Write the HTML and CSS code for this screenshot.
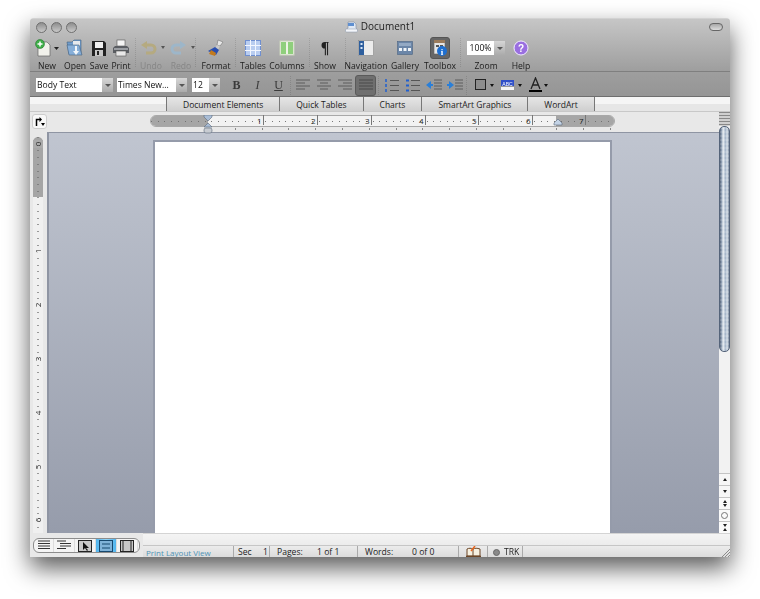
FILE: index.html
```html
<!DOCTYPE html>
<html lang="en">

<head>
     <meta charset="UTF-8">
     <meta name="viewport" content="width=device-width, initial-scale=1.0">
     <title>Document1</title>
     <link rel="stylesheet" href="styles.css">
</head>

<body>
     <div class="window">
          <div class="titlebar">
               <div class="lights"><span></span><span></span><span></span></div>
               <div class="title">
                    <svg width="13" height="13" viewBox="0 0 13 13"><path d="M1 11c0-2 1-2 2-3V2h6l2 2v4c1 1 1.500 2 1 3z" fill="#dfe8f4" stroke="#7f8ca0" stroke-width=".6"/><rect x="3" y="3" width="6" height="3" fill="#5f8fd0"/><rect x="0.500" y="9" width="12" height="3" rx="1" fill="#f4f6fa" stroke="#8b96a8" stroke-width=".5"/></svg>
                    <span>Document1</span>
               </div>
               <div class="pill"></div>
          </div>

          <div class="toolbar">
               <div class="tool"><div class="ico"><svg width="26" height="20" viewBox="0 0 26 20"><path d="M4 4h9l3 3v11H4z" fill="#f2f2ec" stroke="#666" stroke-width=".7"/><circle cx="6" cy="6" r="4.500" fill="#3fae48" stroke="#1c6e24" stroke-width=".5"/><path d="M6 3.500v5M3.500 6h5" stroke="#fff" stroke-width="1.500"/><path d="M20 9h5l-2.500 3z" fill="#222"/></svg></div><p>New</p></div>
               <div class="tool"><div class="ico"><svg width="18" height="18" viewBox="0 0 18 18"><path d="M1 3h5l2-2h7v14H3z" fill="#6f9ccc" stroke="#45617f" stroke-width=".6"/><path d="M7 2h7v9H7z" fill="#e6e9ed"/><path d="M1 6h12l3 10H3z" fill="#86aed8" stroke="#45617f" stroke-width=".6"/><path d="M9 7v5H7l3 4 3-4h-2V7z" fill="#f2f6fa"/></svg></div><p>Open</p></div>
               <div class="tool"><div class="ico"><svg width="16" height="18" viewBox="0 0 16 18"><path d="M1 2h12l2 2v13H1z" fill="#222"/><rect x="4" y="3" width="8" height="6" fill="#f0f0f0"/><rect x="4" y="11" width="8" height="6" fill="#c8c8c8"/><rect x="6" y="12" width="2" height="4" fill="#222"/></svg></div><p>Save</p></div>
               <div class="tool"><div class="ico"><svg width="18" height="18" viewBox="0 0 18 18"><rect x="5" y="1" width="8" height="6" fill="#f4f4f4" stroke="#555" stroke-width=".6"/><path d="M3 7h12l2 2v5H1V9z" fill="#5a5d62"/><rect x="2" y="9" width="14" height="2" fill="#9a9da2"/><rect x="4" y="12" width="10" height="5" fill="#e8e8e8" stroke="#555" stroke-width=".6"/></svg></div><p>Print</p></div>
               <div class="sep"></div>
               <div class="tool off"><div class="ico"><svg width="28" height="16" viewBox="0 0 28 16"><path d="M9 5h5a4 4 0 0 1 0 8H9" fill="none" stroke="#b5aa80" stroke-width="3"/><path d="M4 5l6-4v8z" fill="#b5aa80"/><path d="M24 6h4l-2 3z" fill="#555"/></svg></div><p>Undo</p></div>
               <div class="tool off"><div class="ico"><svg width="28" height="16" viewBox="0 0 28 16"><path d="M14 5H9a4 4 0 0 0 0 8h5" fill="none" stroke="#9db6c9" stroke-width="3"/><path d="M19 5l-6-4v8z" fill="#9db6c9"/><path d="M24 6h4l-2 3z" fill="#555"/></svg></div><p>Redo</p></div>
               <div class="sep"></div>
               <div class="tool"><div class="ico"><svg width="18" height="18" viewBox="0 0 18 18"><path d="M11 1l5 2-3 4-3-1z" fill="#e8e8e8" stroke="#666" stroke-width=".5"/><path d="M10 6l3 1-2 4-3-2z" fill="#c9c9c9"/><path d="M1 12l7-4 4 3-3 5z" fill="#2a4fb0"/><path d="M4 11l5 3-1 3-6-2z" fill="#c27a1e"/></svg></div><p>Format</p></div>
               <div class="sep"></div>
               <div class="tool"><div class="ico"><svg width="16" height="16" viewBox="0 0 16 16"><rect x=".5" y=".5" width="15" height="15" fill="#b9cdf0" stroke="#6f8fd0"/><path d="M5.500 0v16M10.500 0v16M0 5.500h16M0 10.500h16" stroke="#f2f6ff"/></svg></div><p>Tables</p></div>
               <div class="tool"><div class="ico"><svg width="16" height="16" viewBox="0 0 16 16"><rect x="1" y="1" width="14" height="14" fill="#eef3e6" stroke="#c9d4bc"/><rect x="2" y="2" width="5" height="12" fill="#8fcf7c"/><rect x="9" y="2" width="5" height="12" fill="#8fcf7c"/></svg></div><p>Columns</p></div>
               <div class="sep"></div>
               <div class="tool"><div class="ico show">¶</div><p>Show</p></div>
               <div class="sep"></div>
               <div class="tool"><div class="ico"><svg width="16" height="16" viewBox="0 0 16 16"><rect x=".5" y=".5" width="15" height="15" fill="#ececec" stroke="#888" stroke-width=".6"/><rect x="1" y="1" width="5" height="14" fill="#2e5f9e"/><rect x="2.500" y="3" width="2" height="2" fill="#d8e6f6"/><rect x="2.500" y="7" width="2" height="2" fill="#d8e6f6"/></svg></div><p>Navigation</p></div>
               <div class="tool"><div class="ico"><svg width="16" height="14" viewBox="0 0 16 14"><rect x=".5" y=".5" width="15" height="13" fill="#6b86a8" stroke="#4d6482" stroke-width=".6"/><rect x="2" y="2" width="12" height="3" fill="#93a9c4"/><rect x="2" y="7" width="3" height="3" fill="#f0f4f8"/><rect x="6.500" y="7" width="3" height="3" fill="#f0f4f8"/><rect x="11" y="7" width="3" height="3" fill="#f0f4f8"/></svg></div><p>Gallery</p></div>
               <div class="tool"><div class="ico pressed"><svg width="16" height="18" viewBox="0 0 16 18"><rect x="2" y="1" width="11" height="14" fill="#e6e6e6" stroke="#666" stroke-width=".6"/><rect x="2" y="1" width="11" height="3" fill="#9a7b5c"/><rect x="4" y="6" width="3" height="2" fill="#555"/><rect x="8" y="6" width="3" height="2" fill="#555"/><circle cx="10" cy="12" r="5" fill="#1f6fd0"/><text x="10" y="15.500" class="info">i</text></svg></div><p>Toolbox</p></div>
               <div class="sep"></div>
               <div class="tool"><div class="zoombox"><span>100%</span><i class="arrow"></i></div><p>Zoom</p></div>
               <div class="tool"><div class="ico"><svg width="16" height="16" viewBox="0 0 16 16"><circle cx="8" cy="8" r="7" fill="#9a6fe0" stroke="#f2ecff"/><text x="8" y="11.500" class="help">?</text></svg></div><p>Help</p></div>
          </div>

          <div class="formatbar">
               <div class="combo body"><span>Body Text</span><i class="arrow"></i></div>
               <div class="combo font"><span>Times New...</span><i class="arrow"></i></div>
               <div class="combo size"><span>12</span><i class="arrow"></i></div>
               <div class="fbtn letter bold">B</div>
               <div class="fbtn letter ital">I</div>
               <div class="fbtn letter under">U</div>
               <div class="fsep"></div>
               <div class="fbtn"><svg width="14" height="12" viewBox="0 0 14 12"><path d="M0 1h14M0 4h9M0 7h14M0 10h9" stroke="#5c5c5c"/></svg></div>
               <div class="fbtn"><svg width="14" height="12" viewBox="0 0 14 12"><path d="M0 1h14M3 4h8M0 7h14M3 10h8" stroke="#5c5c5c"/></svg></div>
               <div class="fbtn"><svg width="14" height="12" viewBox="0 0 14 12"><path d="M0 1h14M5 4h9M0 7h14M5 10h9" stroke="#5c5c5c"/></svg></div>
               <div class="fbtn active"><svg width="14" height="12" viewBox="0 0 14 12"><path d="M0 1h14M0 4h14M0 7h14M0 10h14" stroke="#4a4a4a"/></svg></div>
               <div class="fsep"></div>
               <div class="fbtn"><svg width="14" height="14" viewBox="0 0 14 14"><path d="M1 1v3M1 6v3M1 11v3" stroke="#1f5fd0" stroke-width="1.500"/><path d="M5 2.500h9M5 7.500h9M5 12.500h9" stroke="#555"/></svg></div>
               <div class="fbtn"><svg width="14" height="14" viewBox="0 0 14 14"><path d="M0 2.500h3M0 7.500h3M0 12.500h3" stroke="#1f5fd0" stroke-width="2"/><path d="M5 2.500h9M5 7.500h9M5 12.500h9" stroke="#555"/></svg></div>
               <div class="fbtn"><svg width="16" height="12" viewBox="0 0 16 12"><path d="M0 6l5-4v8z" fill="#2a7fd8"/><path d="M4 6h3" stroke="#2a7fd8" stroke-width="2"/><path d="M8 1h8M8 4h8M8 7h8M8 10h8" stroke="#5c5c5c"/></svg></div>
               <div class="fbtn"><svg width="16" height="12" viewBox="0 0 16 12"><path d="M7 6L2 2v8z" fill="#2a7fd8"/><path d="M0 6h3" stroke="#2a7fd8" stroke-width="2"/><path d="M8 1h8M8 4h8M8 7h8M8 10h8" stroke="#5c5c5c"/></svg></div>
               <div class="fsep last"></div>
               <div class="fpick"><svg width="20" height="12" viewBox="0 0 20 12"><rect x=".5" y=".5" width="10" height="10" fill="#8d8d8d" stroke="#222"/><path d="M15 5h4l-2 3z" fill="#111"/></svg></div>
               <div class="fpick"><svg width="22" height="14" viewBox="0 0 22 14"><rect x="0" y="2" width="13" height="6" fill="#2f4fc8"/><text x="6.500" y="7.500" class="abc">ABC</text><rect x="0" y="9" width="13" height="3" fill="#f4f4f4"/><path d="M17 6h4l-2 3z" fill="#111"/></svg></div>
               <div class="fpick"><svg width="22" height="16" viewBox="0 0 22 16"><path d="M2 12L6.500 1 11 12M4 8h5" fill="none" stroke="#222" stroke-width="1.300"/><rect x="0" y="13" width="13" height="2" fill="#000"/><path d="M15 7h4l-2 3z" fill="#111"/></svg></div>
          </div>

          <div class="tabbar">
               <div class="tab">Document Elements</div>
               <div class="tab">Quick Tables</div>
               <div class="tab">Charts</div>
               <div class="tab">SmartArt Graphics</div>
               <div class="tab">WordArt</div>
          </div>

          <div class="rulerrow">
               <div class="corner"><svg width="10" height="9" viewBox="0 0 10 9"><path d="M1.500 9V2.500H5" fill="none" stroke="#000" stroke-width="1.500"/><path d="M4.500 0v5L7 2.500zM6 6h4L8 9z" fill="#000"/></svg></div>
               <div class="hruler">
                    <div class="hmargin left"></div>
                    <div class="hmargin right"></div>
                    <b class="n1">1</b><b class="n2">2</b><b class="n3">3</b><b class="n4">4</b><b class="n5">5</b><b class="n6">6</b><b class="n7">7</b>
                    <svg class="indent" width="10" height="19" viewBox="0 0 10 19"><path d="M1 0h8v2L5 6 1 2z" fill="#a9bdd6" stroke="#5c6a7a" stroke-width=".6"/><path d="M5 8l4 4H1z" fill="#a9bdd6" stroke="#5c6a7a" stroke-width=".6"/><rect x="1" y="13" width="8" height="5" rx="2" fill="#c8ccd2" stroke="#5c6a7a" stroke-width=".6"/></svg>
                    <svg class="rindent" width="10" height="8" viewBox="0 0 10 8"><path d="M5 1l4 4v2H1V5z" fill="#c3d3e6" stroke="#5c6a7a" stroke-width=".6"/></svg>
               </div>
          </div>
          <div class="hticks"></div>

          <div class="main">
               <div class="vside">
                    <div class="vruler">
                         <div class="vmargin"></div>
                         <b class="v0">0</b><b class="v1">1</b><b class="v2">2</b><b class="v3">3</b><b class="v4">4</b><b class="v5">5</b><b class="v6">6</b>
                    </div>
               </div>
               <div class="canvas">
                    <div class="page"></div>
               </div>
               <div class="vscroll">
                    <div class="splitter"></div>
                    <div class="thumb"></div>
                    <div class="track"></div>
                    <div class="sbtn"><i class="up"></i></div>
                    <div class="sbtn"><i class="down"></i></div>
                    <div class="sbtn nav"><i class="up"></i><i class="down"></i></div>
                    <div class="sbtn nav"><i class="dot"></i></div>
                    <div class="sbtn nav"><i class="down"></i><i class="up"></i></div>
               </div>
          </div>

          <div class="bottom">
               <div class="views">
                    <div class="capsule">
                         <div class="view"><svg width="14" height="11" viewBox="0 0 14 11"><path d="M1 1h12M1 3.500h12M1 6h12M1 8.500h12" stroke="#333"/></svg></div>
                         <div class="view"><svg width="16" height="11" viewBox="0 0 16 11"><path d="M1 1h9M4 3.500h11M4 6h11M1 8.500h9" stroke="#333"/></svg></div>
                         <div class="view"><svg width="14" height="12" viewBox="0 0 14 12"><rect x=".5" y=".5" width="13" height="11" fill="#c9c9c9" stroke="#222"/><path d="M5 2v8l2-2 2 3 1-1-2-2h3z" fill="#111"/></svg></div>
                         <div class="view on"><svg width="14" height="12" viewBox="0 0 14 12"><rect x=".5" y=".5" width="13" height="11" fill="#7fb2d8" stroke="#17486e"/><path d="M3 4h8M3 8h8" stroke="#17486e"/></svg></div>
                         <div class="view"><svg width="14" height="12" viewBox="0 0 14 12"><rect x=".5" y=".5" width="13" height="11" fill="#c9c9c9" stroke="#222"/><path d="M3 1v10M11 1v10" stroke="#222"/></svg></div>
                    </div>
               </div>
               <div class="statuswrap">
                    <div class="hscroll"></div>
                    <div class="status">
                         <div class="cell viewname">Print Layout View</div>
                         <div class="cell pair sec"><span>Sec</span><span>1</span></div>
                         <div class="cell pair pages"><span>Pages:</span><span>1 of 1</span></div>
                         <div class="cell pair words"><span>Words:</span><span>0 of 0</span></div>
                         <div class="cell book"><svg width="15" height="12" viewBox="0 0 15 12"><path d="M1 3c2-1 4-1 6 0 2-1 4-1 7 0v7H1z" fill="#f6f0e0" stroke="#6b4526"/><path d="M7 3v7" stroke="#6b4526"/><path d="M0 10.500h15" stroke="#6b4526" stroke-width="1.500"/><path d="M5 5l4-5" stroke="#e8641c" stroke-width="1.500"/></svg></div>
                         <div class="cell trk"><i></i><span>TRK</span></div>
                         <div class="cell rest"><svg width="10" height="10" viewBox="0 0 10 10"><path d="M1 10l9-9M4 10l6-6M7 10l3-3" stroke="#8a8a8a"/></svg></div>
                    </div>
               </div>
          </div>
     </div>
</body>

</html>
```

FILE: styles.css
```css
* {
     margin: 0px;
     padding: 0px;
     box-sizing: border-box;
     font-family: "Open Sans", "DejaVu Sans", sans-serif;
}

html, body {
     width: 760px;
     height: 599px;
     overflow: hidden;
     background-color: #fff;
}

body {
     padding: 18px 30px 0px 30px;
}

.window {
     width: 700px;
     height: 539px;
     display: flex;
     flex-direction: column;
     background-color: #e8e8e8;
     border-radius: 4px 4px 0px 0px;
     box-shadow: 0px 11px 24px rgba(0, 0, 0, 0.65);
     overflow: hidden;
     filter: blur(0.35px);
}

/* title + toolbar share one gradient */
.titlebar {
     height: 18px;
     flex: none;
     display: flex;
     align-items: center;
     justify-content: center;
     position: relative;
     padding-bottom: 3px;
     background: linear-gradient(#c6c6c6, #b9b9b9);
     border-top: 1px solid #d2d2d2;
}

.lights {
     position: absolute;
     left: 6px;
     top: 3px;
     display: flex;
     gap: 4px;
}

.lights span {
     width: 11px;
     height: 11px;
     border-radius: 50%;
     border: 1px solid #6f6f6f;
     background: linear-gradient(#8d8d8d, #c9c9c9);
}

.title {
     display: flex;
     align-items: center;
     gap: 3px;
     font-size: 10px;
     color: #222;
}

.pill {
     position: absolute;
     right: 7px;
     top: 4px;
     width: 14px;
     height: 8px;
     border-radius: 4px;
     border: 1px solid #666;
     background: linear-gradient(#a8a8a8, #dcdcdc);
}

.toolbar {
     height: 36px;
     flex: none;
     padding: 1px 0px 0px 3px;
     display: grid;
     grid-template-columns: 28px 28px 20px 24px 3px 30px 30px 0px 40px 0px 34px 34px 6px 30px 6px 40px 38px 32px 5px 50px 20px;
     background: linear-gradient(#b9b9b9, #9e9e9e);
     border-bottom: 1px solid #7f7f7f;
}

.tool {
     display: flex;
     flex-direction: column;
     align-items: center;
     width: 100%;
}

.ico {
     height: 22px;
     flex: none;
     display: flex;
     align-items: center;
     justify-content: center;
}

.tool p {
     padding-top: 1px;
     font-size: 8.6px;
     line-height: 12px;
     color: #1c1c1c;
     white-space: nowrap;
}

.tool.off p {
     color: #868686;
}

.sep {
     width: 1px;
     height: 30px;
     justify-self: end;
     margin-top: 1px;
     background: repeating-linear-gradient(rgba(0, 0, 0, 0.12) 0px, rgba(0, 0, 0, 0.12) 1px, transparent 1px, transparent 2px);
}

.show {
     font-size: 16px;
     font-weight: 700;
     color: #222;
     font-family: "Liberation Serif", serif;
}

.pressed {
     width: 20px;
     border-radius: 3px;
     background-color: #666;
     border: 1px solid #555;
}

.info {
     font-family: "Liberation Serif", serif;
     font-size: 9px;
     font-weight: 700;
     fill: #fff;
     text-anchor: middle;
}

.help {
     font-family: "Liberation Sans", sans-serif;
     font-size: 10px;
     font-weight: 700;
     fill: #fff;
     text-anchor: middle;
}

.zoombox {
     width: 38px;
     height: 14px;
     flex: none;
     margin: 4px 0px;
     display: flex;
     background-color: #fff;
     font-size: 8.6px;
     line-height: 14px;
     color: #111;
}

.zoombox span {
     flex: 1;
     text-align: center;
}

.arrow {
     width: 11px;
     display: flex;
     align-items: center;
     justify-content: center;
     background: linear-gradient(#d6d6d6, #ababab);
}

.arrow::after {
     content: "";
     border-left: 3px solid transparent;
     border-right: 3px solid transparent;
     border-top: 3px solid #555;
}

.formatbar {
     height: 25px;
     flex: none;
     display: flex;
     align-items: center;
     padding: 2px 0px 0px 6px;
     background: linear-gradient(#9e9e9e, #959595);
     border-bottom: 1px solid #6e6e6e;
}

.combo {
     height: 14px;
     display: flex;
     background-color: #fff;
     font-size: 8.6px;
     line-height: 14px;
     color: #111;
}

.combo span {
     flex: 1;
     padding-left: 1px;
     white-space: nowrap;
}

.body { width: 77px; margin-right: 4px; }
.font { width: 70px; margin-right: 5px; }
.size { width: 28px; margin-right: 6px; }

.fbtn {
     width: 21px;
     height: 21px;
     display: flex;
     align-items: center;
     justify-content: center;
     flex: none;
}

.fpick {
     height: 21px;
     display: flex;
     align-items: center;
     flex: none;
     margin-right: 6px;
}

.fsep {
     width: 1px;
     height: 19px;
     margin: 0px 1px;
     flex: none;
     background: repeating-linear-gradient(rgba(0, 0, 0, 0.12) 0px, rgba(0, 0, 0, 0.12) 1px, transparent 1px, transparent 2px);
}

.fsep.last {
     margin-right: 8px;
}

.active + .fsep {
     margin: 0px 2px;
}

.letter {
     font-family: "Liberation Serif", serif;
     font-size: 12px;
     color: #3a3a3a;
}

.bold { font-weight: 700; }
.ital { font-style: italic; }
.under { text-decoration: underline; }

.active {
     background-color: #6f6f6f;
     border: 1px solid #5a5a5a;
     border-radius: 3px;
}

.abc {
     font-family: "Liberation Sans", sans-serif;
     font-size: 5px;
     fill: #fff;
     text-anchor: middle;
}

.tabbar {
     height: 15px;
     flex: none;
     display: flex;
     padding-left: 136px;
     background: linear-gradient(#f5f5f5 50%, #e6e6e6 50%);
     border-bottom: 1px solid #c8c8c8;
}

.tab {
     padding: 0px 16px;
     font-size: 8.5px;
     line-height: 16px;
     color: #222;
     white-space: nowrap;
     background: linear-gradient(#e6e6e6, #cfcfcf);
     border-left: 1px solid #777;
}

.tab:last-child {
     border-right: 1px solid #777;
}

.rulerrow {
     height: 15px;
     flex: none;
     display: flex;
     background-color: #e8e8e8;
     padding-top: 2px;
}

.corner {
     width: 15px;
     height: 15px;
     flex: none;
     margin-left: 2px;
     display: flex;
     align-items: center;
     justify-content: center;
     background-color: #f8f8f8;
     border: 1px solid #ccc;
     border-radius: 3px;
     position: relative;
     z-index: 2;
}

.hruler {
     width: 465px;
     height: 12px;
     flex: none;
     margin: 1px 0px 0px 103px;
     position: relative;
     border-radius: 6px;
     border: 1px solid #a8a8a8;
     background: repeating-linear-gradient(90deg, #777 0px, #777 1px, transparent 1px, transparent 6.72px) 0px 5px / 100% 1px no-repeat #f2f2f2;
}

.hruler b {
     position: absolute;
     top: -1px;
     padding-right: 1px;
     font-size: 8px;
     line-height: 12px;
     font-weight: 400;
     color: #222;
     border-right: 1px solid #777;
     height: 10px;
}

.hmargin {
     position: absolute;
     top: 0px;
     height: 10px;
     background-color: rgba(110, 110, 110, 0.58);
}

.hmargin.left { left: 0px; width: 57px; border-radius: 5px 0px 0px 5px; }
.hmargin.right { right: 0px; width: 58px; border-radius: 0px 5px 5px 0px; }

.n1 { left: 106px; }
.n2 { left: 160px; }
.n3 { left: 214px; }
.n4 { left: 268px; }
.n5 { left: 321px; }
.n6 { left: 375px; }
.n7 { left: 428px; }

.indent { position: absolute; left: 52px; top: -1px; }
.rindent { position: absolute; left: 402px; top: 2px; }

.hticks {
     height: 5px;
     flex: none;
     background: repeating-linear-gradient(90deg, #888 0px, #888 1px, transparent 1px, transparent 26.8px) 178px 1px / 420px 2px no-repeat #e8e8e8;
}

.main {
     flex: 1;
     min-height: 0;
     display: flex;
}

.vside {
     width: 17px;
     flex: none;
     padding: 5px 0px 0px 3px;
     background-color: #e8e8e8;
}

.vruler {
     width: 10px;
     height: 100%;
     position: relative;
     border-radius: 5px 5px 0px 0px;
     background: repeating-linear-gradient(#999 0px, #999 1px, transparent 1px, transparent 6.72px) 4px 0px / 2px 100% no-repeat #f0f0f0;
}

.vmargin {
     position: absolute;
     left: 0px;
     top: 0px;
     width: 100%;
     height: 60px;
     border-radius: 5px 5px 0px 0px;
     background-color: rgba(110, 110, 110, 0.58);
}

.vruler b {
     position: absolute;
     left: 1px;
     width: 8px;
     height: 10px;
     font-size: 8px;
     line-height: 10px;
     font-weight: 400;
     text-align: center;
     color: #222;
     background-color: #f0f0f0;
     transform: rotate(-90deg);
}

.vruler b.v0 { top: 2px; background-color: #aaa; }
.v1 { top: 109px; }
.v2 { top: 163px; }
.v3 { top: 217px; }
.v4 { top: 271px; }
.v5 { top: 325px; }
.v6 { top: 378px; }

.canvas {
     flex: 1;
     display: flex;
     justify-content: center;
     padding: 9px 0px 0px 0px;
     background: linear-gradient(#c0c5d0, #969cab);
     border-top: 1px solid #8f95a3;
     border-left: 2px solid #8f95a3;
}

.page {
     width: 455px;
     height: 100%;
     margin-left: -4px;
     background-color: #fff;
     box-shadow: 0px 0px 0px 2px #959baa;
}

.vscroll {
     width: 11px;
     flex: none;
     display: flex;
     flex-direction: column;
     background-color: #f2f2f2;
     margin-top: -20px;
     z-index: 1;
}

.splitter {
     height: 14px;
     flex: none;
     background: repeating-linear-gradient(#888 0px, #888 1px, #cfcfcf 1px, #cfcfcf 3px);
}

.thumb {
     height: 226px;
     flex: none;
     border-radius: 5px;
     border: 1px solid #55647a;
     background: repeating-linear-gradient(rgba(255, 255, 255, 0.14) 0px, rgba(255, 255, 255, 0.14) 2px, transparent 2px, transparent 4px), linear-gradient(90deg, #55647a, #8394aa 15%, #e8eef4 35%, #a3b4c8 60%, #d5deE8 80%, #75859a);
}

.track {
     flex: 1;
}

.sbtn {
     height: 12px;
     flex: none;
     display: flex;
     flex-direction: column;
     align-items: center;
     justify-content: center;
     gap: 1px;
     background-color: #f6f6f6;
     border-top: 1px solid #c4c4c4;
}

.sbtn.nav {
     background-color: #fafafa;
}

.up {
     border-left: 2.500px solid transparent;
     border-right: 2.500px solid transparent;
     border-bottom: 3px solid #222;
}

.down {
     border-left: 2.500px solid transparent;
     border-right: 2.500px solid transparent;
     border-top: 3px solid #222;
}

.dot {
     width: 7px;
     height: 7px;
     border-radius: 50%;
     border: 1px solid #777;
}

.bottom {
     height: 24px;
     flex: none;
     display: flex;
}

.views {
     width: 113px;
     flex: none;
     padding: 5px 0px 0px 3px;
     background-color: #e8e8e8;
}

.capsule {
     width: 107px;
     height: 15px;
     display: flex;
     align-items: center;
     border: 1px solid #8c8c8c;
     border-radius: 6px;
     background-color: #f4f4f4;
     overflow: hidden;
}

.view {
     width: 21px;
     height: 100%;
     flex: none;
     display: flex;
     align-items: center;
     justify-content: center;
     border-right: 1px solid #dcdcdc;
}

.view:first-child {
     width: 20px;
}

.view.on {
     background: linear-gradient(90deg, #4fb4ee, #93d4f6 50%, #4fb4ee);
}

.statuswrap {
     flex: 1;
     display: flex;
     flex-direction: column;
}

.hscroll {
     height: 12px;
     flex: none;
     background: linear-gradient(#f4f4f4, #ececec);
     border-top: 1px solid #d4d4d4;
}

.status {
     flex: 1;
     display: grid;
     grid-template-columns: 91px 36px 88px 101px 29px 35px 1fr;
     background: linear-gradient(#ececec, #dadada);
     border-top: 1px solid #c6c6c6;
}

.cell {
     font-size: 8.6px;
     line-height: 11px;
     color: #222;
     white-space: nowrap;
     border-right: 1px solid #aaa;
     display: flex;
     align-items: center;
}

.viewname {
     padding-left: 3px;
     font-size: 8px;
     color: #4f93b5;
}

.pair {
     padding-left: 7px;
}

.sec { padding-left: 4px; }
.sec span:first-child { width: 25px; }
.pages span:first-child { width: 40px; }
.words span:first-child { width: 47px; }

.book {
     justify-content: center;
}

.trk {
     gap: 4px;
     padding-left: 5px;
}

.trk i {
     width: 7px;
     height: 7px;
     border-radius: 50%;
     background-color: #8a8a8a;
     border: 1px solid #666;
}

.rest {
     border-right: none;
     justify-content: flex-end;
     align-items: flex-end;
}
```
